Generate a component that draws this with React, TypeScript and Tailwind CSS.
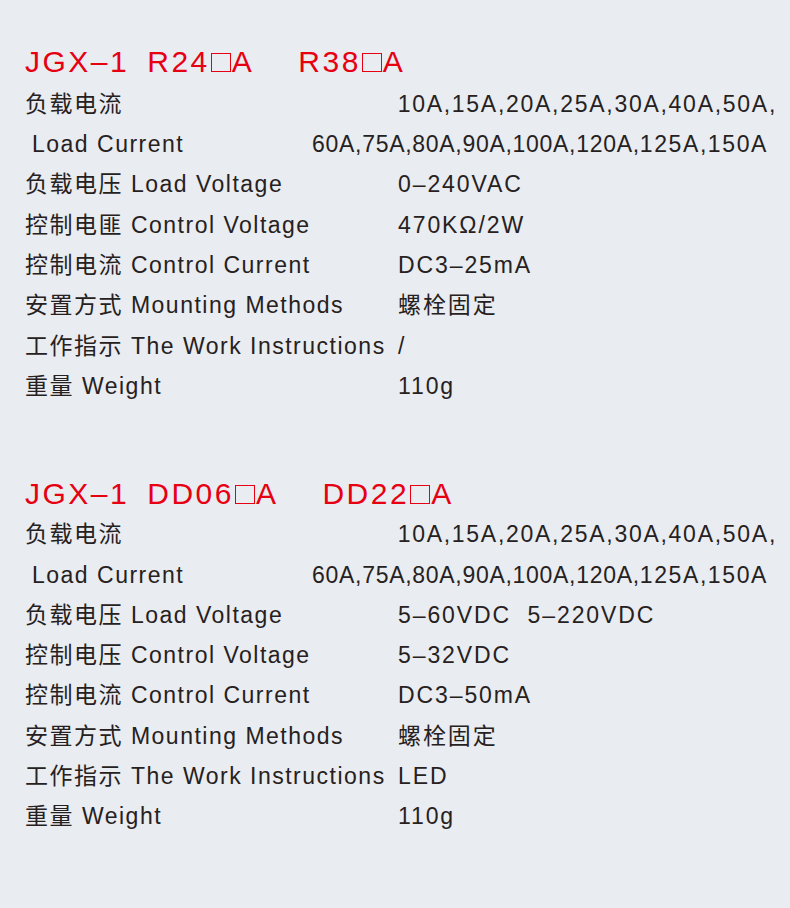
const font = {
  fontFamily: '"Liberation Sans", "Noto Sans CJK SC", sans-serif',
};

type Row = { label: string; value: string };

const Box = () => (
  <span className="inline-block w-[20px] h-[19px] border-[1.5px] border-[#e60012] mx-[1px] align-[0px]" />
);

function Title({ a, b, h }: { a: string; b: string; h: string }) {
  return (
    <div className={`${h} flex items-center text-[30px] leading-none tracking-[2.5px] text-[#e60012]`}>
      <span>JGX–1</span>
      <span className="ml-[18px]">
        {a}
        <Box />A
      </span>
      <span className="ml-[44px]">
        {b}
        <Box />A
      </span>
    </div>
  );
}

function Spec({ rows }: { rows: Row[] }) {
  return (
    <div>
      <div className="h-[40.3px] flex items-center justify-between">
        <span>负载电流</span>
        <span className="mr-[-2px] tracking-[1.72px]">10A,15A,20A,25A,30A,40A,50A,</span>
      </div>
      <div className="h-[40.3px] flex items-center justify-between">
        <span className="pl-[7px]">Load Current</span>
        <span className="mr-[7px]">
          <span className="tracking-[0.7px]">60A,75A,80A,90A,100A,120A,</span>
          <span className="tracking-[1.6px]">125A,150A</span>
        </span>
      </div>
      {rows.map((r) => (
        <div key={r.label} className="h-[40.3px] grid grid-cols-[373px_1fr] items-center">
          <span className="whitespace-nowrap">{r.label}</span>
          <span className="whitespace-pre tracking-[1.9px]">{r.value}</span>
        </div>
      ))}
    </div>
  );
}

const ac: Row[] = [
  { label: "负载电压 Load Voltage", value: "0–240VAC" },
  { label: "控制电匪 Control Voltage", value: "470KΩ/2W" },
  { label: "控制电流 Control Current", value: "DC3–25mA" },
  { label: "安置方式 Mounting Methods", value: "螺栓固定" },
  { label: "工作指示 The Work Instructions", value: "/" },
  { label: "重量 Weight", value: "110g" },
];

const dc: Row[] = [
  { label: "负载电压 Load Voltage", value: "5–60VDC  5–220VDC" },
  { label: "控制电压 Control Voltage", value: "5–32VDC" },
  { label: "控制电流 Control Current", value: "DC3–50mA" },
  { label: "安置方式 Mounting Methods", value: "螺栓固定" },
  { label: "工作指示 The Work Instructions", value: "LED" },
  { label: "重量 Weight", value: "110g" },
];

export default function App() {
  return (
    <div
      style={font}
      className="w-[790px] h-[908px] bg-[#e9ecf0] pl-[25px] pr-[15px] pt-[40px] text-[23px] tracking-[1.5px] text-[#262120] overflow-hidden"
    >
      <Title a="R24" b="R38" h="h-[44px]" />
      <Spec rows={ac} />
      <div className="h-[68px]" />
      <Title a="DD06" b="DD22" h="h-[40px]" />
      <Spec rows={dc} />
    </div>
  );
}
